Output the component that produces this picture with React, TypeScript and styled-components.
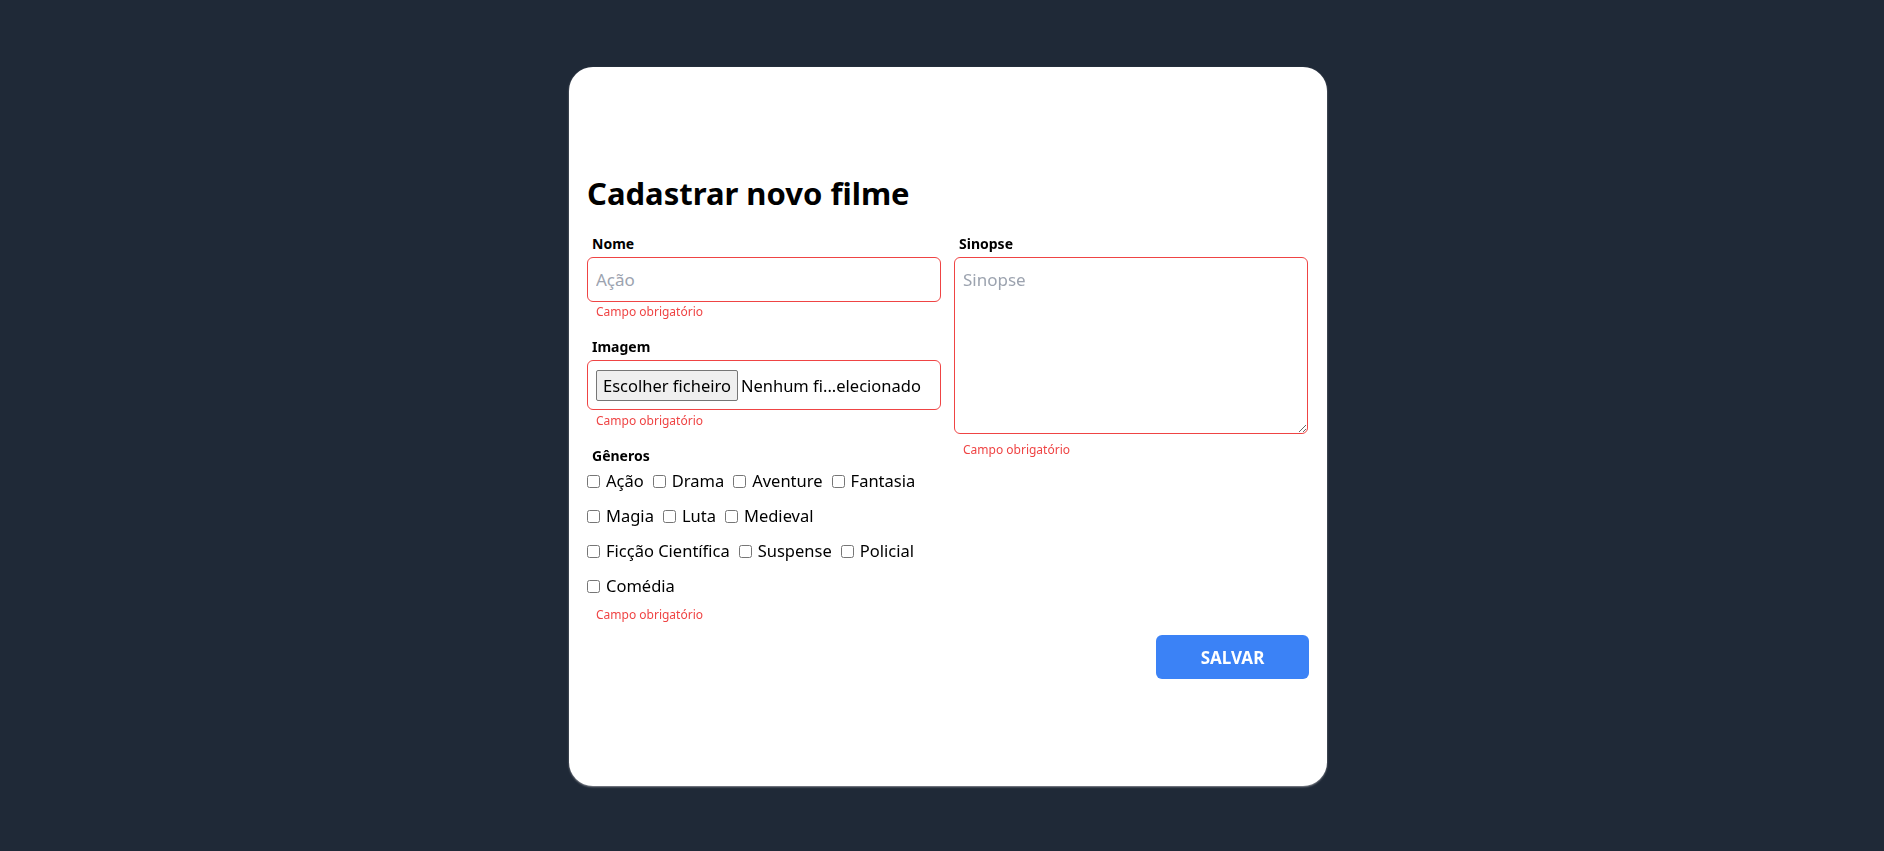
import React from "react";
import styled, { createGlobalStyle } from "styled-components";

const GlobalStyle = createGlobalStyle`
  html, body {
    margin: 0;
    padding: 0;
    background: #1f2937;
  }
  body {
    font-family: "Noto Sans", "Open Sans", sans-serif;
    color: #000;
  }
  * { box-sizing: border-box; }
`;

const Page = styled.div`
  min-height: 851px;
  display: flex;
  justify-content: center;
  align-items: flex-start;
  padding-top: 67px;
  padding-left: 12px;
`;

const Card = styled.div`
  width: 758px;
  height: 719px;
  background: #fff;
  border-radius: 24px;
  box-shadow: 0 1px 2px rgba(148, 150, 156, 0.9);
  padding: 108px 18px 0;
  display: flex;
  flex-direction: column;
`;

const Title = styled.h1`
  margin: 0 0 23px 0;
  font-size: 31px;
  line-height: 36px;
  font-weight: 700;
`;

const Grid = styled.div`
  display: grid;
  grid-template-columns: 354px 354px;
  column-gap: 13px;
  align-items: start;
`;

const Column = styled.div`
  display: flex;
  flex-direction: column;
`;

const Label = styled.label<{ $top?: number }>`
  display: block;
  margin: ${(p) => p.$top ?? 0}px 0 3px 5px;
  font-size: 14px;
  line-height: 20px;
  font-weight: 700;
`;

const TextInput = styled.input`
  height: 45px;
  width: 100%;
  border: 1px solid #ef4444;
  border-radius: 6px;
  padding: 0 8px;
  font-family: inherit;
  font-size: 17px;
  color: #000;
  outline: none;
  &::placeholder { color: #9ca3af; }
`;

const FileBox = styled.div`
  height: 50px;
  border: 1px solid #ef4444;
  border-radius: 6px;
  padding: 0 8px;
  display: flex;
  align-items: center;
  gap: 3px;
  font-size: 16.5px;
`;

const FileButton = styled.span`
  display: inline-flex;
  align-items: center;
  height: 31px;
  padding: 0 6px;
  background: #efefef;
  border: 1px solid #767676;
  border-radius: 2px;
  color: #000;
`;

const FileName = styled.span`
  color: #000;
  white-space: nowrap;
`;

const TextArea = styled.textarea`
  display: block;
  height: 177px;
  width: 100%;
  border: 1px solid #ef4444;
  border-radius: 6px;
  padding: 10px 8px;
  font-family: inherit;
  font-size: 17px;
  outline: none;
  &::placeholder { color: #9ca3af; }
`;

const ErrorText = styled.span<{ $top?: number }>`
  display: block;
  margin: ${(p) => p.$top ?? 2}px 0 0 9px;
  font-size: 12px;
  line-height: 16px;
  color: #ef4444;
`;

const Genres = styled.div`
  display: flex;
  flex-wrap: wrap;
  row-gap: 11px;
  column-gap: 9px;
`;

const GenreItem = styled.label`
  display: inline-flex;
  align-items: center;
  gap: 6px;
  font-size: 16.5px;
  line-height: 24px;
`;

const Check = styled.input`
  margin: 0;
  width: 13px;
  height: 13px;
`;

const Footer = styled.div`
  display: flex;
  justify-content: flex-end;
  margin-top: 12px;
`;

const SaveButton = styled.button`
  width: 153px;
  height: 44px;
  border: none;
  border-radius: 6px;
  background: #3b82f6;
  color: #fff;
  font-family: inherit;
  font-size: 17px;
  font-weight: 700;
  cursor: pointer;
`;

const genres = [
  "Ação",
  "Drama",
  "Aventure",
  "Fantasia",
  "Magia",
  "Luta",
  "Medieval",
  "Ficção Científica",
  "Suspense",
  "Policial",
  "Comédia",
];

export default function App() {
  return (
    <>
      <GlobalStyle />
      <Page>
        <Card>
          <Title>Cadastrar novo filme</Title>
          <Grid>
            <Column>
              <Label htmlFor="nome">Nome</Label>
              <TextInput id="nome" placeholder="Ação" autoFocus />
              <ErrorText>Campo obrigatório</ErrorText>
              <Label $top={17}>Imagem</Label>
              <FileBox>
                <FileButton>Escolher ficheiro</FileButton>
                <FileName>Nenhum fi...elecionado</FileName>
              </FileBox>
              <ErrorText $top={3}>Campo obrigatório</ErrorText>
              <Label $top={17}>Gêneros</Label>
              <Genres>
                {genres.map((g) => (
                  <GenreItem key={g}>
                    <Check type="checkbox" />
                    {g}
                  </GenreItem>
                ))}
              </Genres>
              <ErrorText $top={9}>Campo obrigatório</ErrorText>
            </Column>
            <Column>
              <Label htmlFor="sinopse">Sinopse</Label>
              <TextArea id="sinopse" placeholder="Sinopse" />
              <ErrorText $top={8}>Campo obrigatório</ErrorText>
            </Column>
          </Grid>
          <Footer>
            <SaveButton>SALVAR</SaveButton>
          </Footer>
        </Card>
      </Page>
    </>
  );
}
